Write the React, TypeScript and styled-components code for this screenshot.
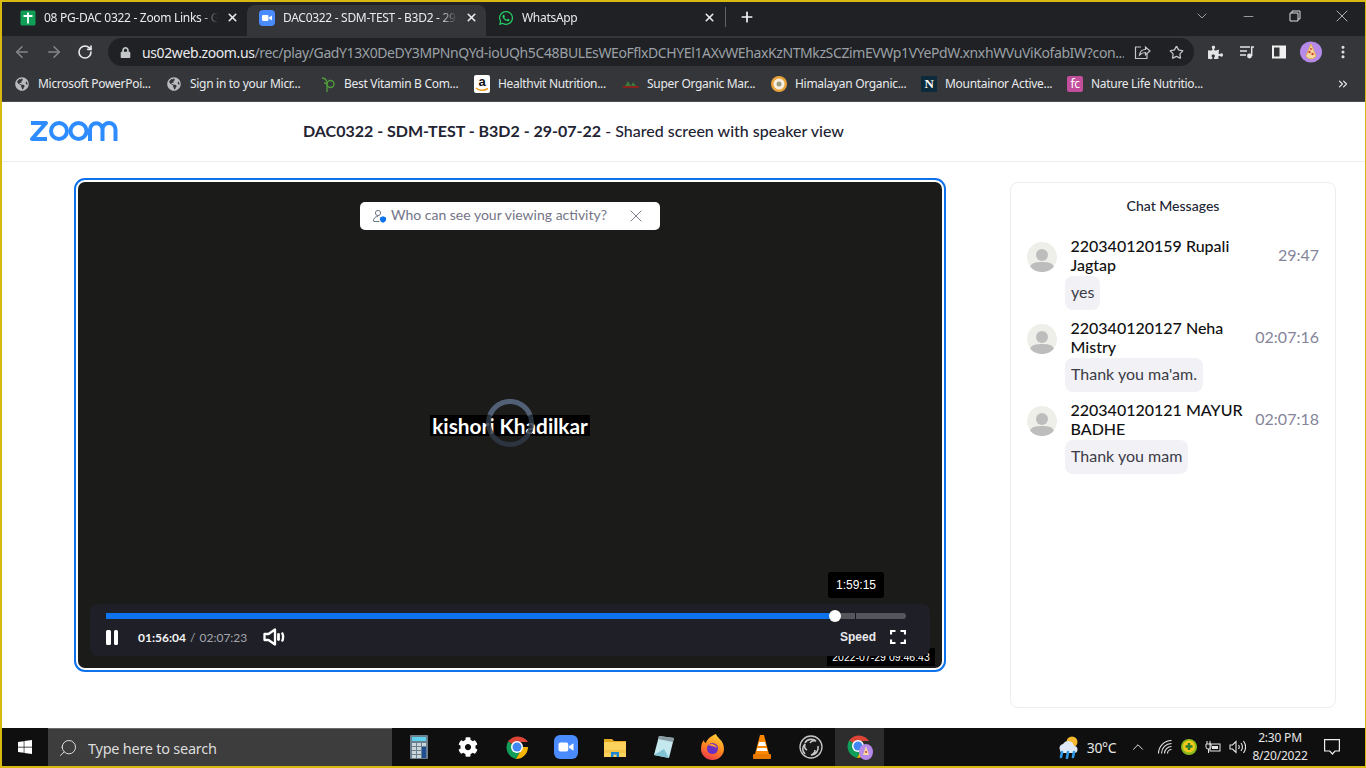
import React from "react";
import styled, { createGlobalStyle } from "styled-components";
import { FaWhatsapp, FaWindows, FaPuzzlePiece, FaLock, FaGlobeAmericas, FaCog } from "react-icons/fa";
import { ArrowLeft, ArrowRight, RotateCw, X, Plus, ChevronDown, Minus, Star, MoreVertical, Search, ChevronUp, ChevronsRight } from "lucide-react";

const Global = createGlobalStyle`
  html, body { margin: 0; padding: 0; background: #fff; overflow: hidden; }
  * { box-sizing: border-box; }
`;

const Screen = styled.div`
  width: 1366px; height: 768px; display: flex; flex-direction: column;
  border-style: solid; border-color: #d8b90f; border-width: 2px 1px 2px 2px;
  font-family: "Lato", sans-serif; overflow: hidden; background: #fff;
`;
const TabBar = styled.div`
  height: 34px; background: #202124; display: flex; align-items: flex-end; padding-left: 6px; flex: none;
`;
const Tab = styled.div<{ $active?: boolean; $w: number }>`
  width: ${p => p.$w}px; height: 31px; display: flex; align-items: center; padding: 0 8px 6px 12px; gap: 8px; flex: none;
  background: ${p => (p.$active ? "#35363a" : "transparent")};
  border-radius: 8px 8px 0 0; color: #e8eaed; font: 12px "Noto Sans", sans-serif;
`;
const TabTitle = styled.span`
  flex: 1; white-space: nowrap; overflow: hidden; letter-spacing: -0.3px;
  -webkit-mask-image: linear-gradient(90deg, #000 90%, transparent 100%);
  mask-image: linear-gradient(90deg, #000 90%, transparent 100%);
`;
const TabDivider = styled.div`
  width: 1px; height: 20px; background: #5f6368; margin: 0 13px 9px 1px; flex: none;
`;
const PlusWrap = styled.div`
  height: 30px; width: 16px; margin-bottom: 4px; color: #f2f3f4; display: flex; align-items: center; justify-content: center; flex: none;
`;
const WindowControls = styled.div`
  margin-left: auto; height: 34px; display: flex; color: #dfe0e2;
`;
const WinButton = styled.div`
  width: 46.5px; height: 28px; display: flex; justify-content: center; align-items: center;
`;
const Toolbar = styled.div`
  height: 32px; background: #35363a; display: flex; align-items: center; flex: none; padding-left: 11px;
`;
const NavButtons = styled.div`
  width: 95px; display: flex; gap: 14px; align-items: center; flex: none;
`;
const Omnibox = styled.div`
  width: 1086px; height: 28px; border-radius: 14px; background: #202124; display: flex; align-items: center;
  padding: 0 10px 0 12px; flex: none; color: #c4c7c8;
`;
const UrlText = styled.div`
  flex: 1; margin-left: 11px; font: 14px "Noto Sans", sans-serif; letter-spacing: -0.39px; color: #9aa0a6; white-space: nowrap; overflow: hidden;
  b { font-weight: 400; color: #e8eaed; }
`;
const OmniIcons = styled.div`
  display: flex; align-items: center; gap: 18px; margin-left: 10px; flex: none;
`;
const ToolIcons = styled.div`
  display: flex; align-items: center; margin-left: 5px; color: #e3e4e6;
`;
const ToolSlot = styled.div`
  width: 32px; display: flex; align-items: center; justify-content: center; flex: none;
`;
const Bookmarks = styled.div`
  height: 34px; background: #35363a; display: flex; align-items: center; padding: 0 0 2px 12px; flex: none;
  border-bottom: 1px solid #4a4b4f;
`;
const Bookmark = styled.div<{ $w: number }>`
  width: ${p => p.$w}px; display: flex; align-items: center; gap: 8px; color: #e8eaed; font: 12px "Noto Sans", sans-serif; letter-spacing: -0.3px; white-space: nowrap; flex: none;
`;
const FavSlot = styled.div`
  width: 16px; height: 16px; flex: none; display: flex; align-items: center; justify-content: center; color: #b8babd;
`;
const More = styled.div`
  margin-left: auto; margin-right: 15px; color: #e8eaed; display: flex;
`;
const Header = styled.header`
  height: 60px; flex: none; display: flex; align-items: center; border-bottom: 1px solid #ededed; padding: 0 0 1px 28px; background: #fff;
`;
const LogoWrap = styled.div`
  width: 274px; flex: none; display: flex;
`;
const Title = styled.h1`
  margin: 0 0 1px -1px; font: 500 16px "Lato", sans-serif; color: #232333; white-space: nowrap;
  b { font-weight: 700; }
`;
const Main = styled.main`
  flex: 1; display: flex; align-items: flex-start; padding: 16px 30px 0 72px; min-height: 0;
`;
const VideoFrame = styled.div`
  width: 872px; height: 494px; flex: none; border: 2px solid #0e72ed; border-radius: 11px; padding: 2px; background: #fff;
`;
const Video = styled.div`
  position: relative; width: 100%; height: 100%; background: #1b1b1a; border-radius: 7px;
`;
const Notice = styled.div`
  position: absolute; left: 282px; top: 20px; width: 300px; height: 28px; background: #fff; border-radius: 5px;
  display: flex; align-items: center; padding: 0 14px 0 12px; color: #747487; font-size: 14px;
`;
const NoticeText = styled.span`
  flex: 1; margin: 0 0 3px 3px;
`;
const NameTag = styled.div`
  position: absolute; left: 352px; top: 233px; width: 160px; height: 21px; background: #000; color: #fff;
  font: 700 20.8px/21px "Lato", sans-serif; text-align: center; white-space: nowrap;
`;
const Spinner = styled.svg`
  position: absolute; left: 408px; top: 217px;
`;
const Stamp = styled.div`
  position: absolute; left: 749px; top: 466px; width: 108px; height: 18px; background: #000; color: #fff;
  font: 10.5px/18px "Liberation Sans", sans-serif; text-align: center; white-space: nowrap;
`;
const Controls = styled.div`
  position: absolute; left: 12px; top: 422px; width: 840px; height: 52px; background: #1f2027; border-radius: 8px;
  padding: 9px 24px 0 16px;
`;
const Track = styled.div`
  position: relative; height: 6px; background: #55565c; border-radius: 0 3px 3px 0;
`;
const Played = styled.div`
  position: absolute; left: 0; top: 0; bottom: 0; background: #0e72ed;
`;
const Tick = styled.div`
  position: absolute; left: 749px; top: 0; bottom: 0; width: 1px; background: #15161a;
`;
const Thumb = styled.div`
  position: absolute; top: -3px; width: 12px; height: 12px; margin-left: -6px; border-radius: 50%; background: #fff;
`;
const ControlRow = styled.div`
  display: flex; align-items: center; height: 26px; margin-top: 5px; color: #fff;
`;
const PauseIcon = styled.div`
  display: flex; gap: 3px; width: 32px; flex: none;
  i { display: block; width: 4.5px; height: 15px; border-radius: 1.5px; background: #fff; }
`;
const Times = styled.div`
  font-size: 12px; color: #a6a6ad; white-space: nowrap; word-spacing: 1px;
  b { color: #f2f2f4; font-weight: 700; }
`;
const VolumeWrap = styled.div`
  display: flex; margin-left: 16px;
`;
const Speed = styled.div`
  margin-left: auto; font: 700 12px "Liberation Sans", sans-serif; color: #e9e9ec;
`;
const FullWrap = styled.div`
  display: flex; margin-left: 14px;
`;
const Tooltip = styled.div`
  position: absolute; left: 750px; top: 390px; width: 56px; height: 26px; background: #000; border-radius: 3px; color: #fff;
  font: 12px/26px "Liberation Sans", sans-serif; text-align: center;
`;
const Chat = styled.aside`
  margin-left: 64px; margin-top: 4px; width: 326px; height: 526px; flex: none; border: 1px solid #ededed; border-radius: 8px;
  padding: 14px 16px 0 16px;
`;
const ChatTitle = styled.div`
  text-align: center; font: 500 14px/18px "Lato", sans-serif; color: #1c2433; margin-bottom: 21px;
`;
const Msg = styled.div`
  display: flex; flex-direction: column; margin-bottom: 8px;
`;
const MsgHead = styled.div`
  display: flex; align-items: center;
`;
const Avatar = styled.svg`
  flex: none; margin: 4px 14px 0 0;
`;
const Name = styled.div`
  width: 179px; flex: none; font: 500 16px/19px "Lato", sans-serif; color: #111; margin-left: -0.5px;
`;
const Time = styled.div`
  margin-left: auto; margin-bottom: 2px; color: #85859a; font: 16px "Lato", sans-serif;
`;
const Bubble = styled.div`
  align-self: flex-start; margin: 2px 0 0 38px; height: 34px; padding: 0 6px; border-radius: 8px; background: #f1f1f6; color: #3c3c46;
  font: 16px/32px "Lato", sans-serif;
`;
const Taskbar = styled.footer`
  height: 38px; flex: none; background: #0f0f0f; display: flex; align-items: stretch; color: #e6e6e6;
`;
const StartButton = styled.div`
  width: 46px; display: flex; align-items: center; justify-content: center; color: #fff; flex: none;
`;
const SearchBox = styled.div`
  width: 344px; flex: none; background: #3d3d3d; border-top: 1px solid #6a6a6a; display: flex; align-items: center; padding-left: 10px; gap: 10px;
  font: 14.5px "Noto Sans", sans-serif; letter-spacing: -0.25px; color: #dcdcdc;
  svg { transform: scaleX(-1); }
`;
const Pinned = styled.div`
  display: flex; margin-left: 2px;
`;
const PinSlot = styled.div<{ $active?: boolean }>`
  width: 49px; display: flex; align-items: center; justify-content: center; background: ${p => (p.$active ? "#2d2d2d" : "transparent")}; position: relative;
`;
const Tray = styled.div`
  margin-left: auto; display: flex; align-items: center; font: 14px "Noto Sans", sans-serif; letter-spacing: -0.3px;
`;
const TrayItem = styled.div<{ $w: number }>`
  width: ${p => p.$w}px; display: flex; align-items: center; justify-content: center; flex: none;
`;
const Clock = styled.div`
  width: 60px; text-align: center; font: 12px/18px "Noto Sans", sans-serif; letter-spacing: -0.2px; white-space: nowrap;
`;
const NoteWrap = styled.div`
  width: 55px; display: flex; justify-content: flex-start; align-items: center; padding-left: 14px;
`;

const SheetIcon = () => (
  <svg width="16" height="16" viewBox="0 0 16 16"><rect x="0.5" y="0.5" width="15" height="15" rx="1.5" fill="#0f9d58" /><path d="M3.5 6h9M8 2.5v11" stroke="#fff" strokeWidth="1.8" /></svg>
);
const ZoomTile = ({ s = 16 }: { s?: number }) => (
  <svg width={s} height={s} viewBox="0 0 16 16"><rect width="16" height="16" rx="4" fill="#4a8cff" /><rect x="3" y="5" width="6.5" height="6" rx="1.3" fill="#fff" /><path d="M10 7.5l3-2v5l-3-2z" fill="#fff" /></svg>
);
const Logo = () => (
  <svg width="90" height="22" viewBox="0 0 90 22" fill="none" stroke="#2d8cff" strokeWidth="4">
    <path d="M1 3h15L2 19h15" strokeLinejoin="round" />
    <circle cx="29" cy="11" r="8" />
    <circle cx="48.5" cy="11" r="8" />
    <path d="M60 21V9.5a6 6 0 0 1 12.5 0V21M72.5 9.5a6 6 0 0 1 13 0V21" />
  </svg>
);
const Avatarish = () => (
  <Avatar width="30" height="30" viewBox="0 0 30 30">
    <circle cx="15" cy="15" r="15" fill="#efefe9" />
    <circle cx="15" cy="13" r="6" fill="#bdbdbd" />
    <path d="M3 24.5C5 20.5 10 20 15 20s10 .5 12 4.500A15 15 0 0 1 15 30 15 15 0 0 1 3 24.500z" fill="#bdbdbd" />
  </Avatar>
);
const ShareIcon = () => (
  <svg width="17" height="16" viewBox="0 0 17 16" fill="none" stroke="#c4c7c8" strokeWidth="1.2"><path d="M7 3H1.500v11.500H13V10" /><path d="M5.500 11c.5-3.500 3-5.500 6-5.500V3l4.500 4-4.500 3.800V8.500c-2.500 0-4.500 1-6 2.500z" /></svg>
);
const ProfileIcon = () => (
  <svg width="22" height="22" viewBox="0 0 22 22">
    <ellipse cx="11" cy="11" rx="11" ry="10.5" fill="#b58ae8" />
    <path d="M11 3l5 12a6 6 0 0 1-10 0z" fill="#f4d9a0" stroke="#e8b050" />
    <circle cx="9.500" cy="11" r="1.200" fill="#d04030" /><circle cx="12.500" cy="13" r="1.200" fill="#d04030" /><circle cx="11" cy="8" r="1" fill="#d04030" />
  </svg>
);
const SideIcon = () => (
  <svg width="16" height="16" viewBox="0 0 16 16"><rect x="1" y="1.500" width="14" height="13" fill="#f0f0f0" /><rect x="3" y="3.500" width="5.500" height="9" fill="#35363a" /></svg>
);
const MediaIcon = () => (
  <svg width="16" height="16" viewBox="0 0 16 16" fill="none" stroke="#e3e4e6" strokeWidth="1.5"><path d="M1 3h10M1 7h7M1 11h6M12 3h3M12.700 3v9" /><circle cx="10.500" cy="12" r="1.700" fill="#e3e4e6" /></svg>
);
const VolumeIcon = () => (
  <svg width="23" height="18" viewBox="0 0 23 18" fill="none" stroke="#fff" strokeWidth="2.300"><path d="M1.500 6h4L12 1.500v15L5.500 12h-4z" strokeLinejoin="round" /><path d="M15.500 6.500v5" strokeLinecap="round" strokeWidth="2.800" /><path d="M19 4.500c1.500 3 1.500 6 0 9" /></svg>
);
const FullIcon = () => (
  <svg width="16" height="16" viewBox="0 0 16 16" fill="none" stroke="#fff" strokeWidth="2.200"><path d="M1 5.500V2h4.500M10.500 2H15v3.500M15 10.500V14h-4.500M5.500 14H1v-3.500" /></svg>
);
const ViewerIcon = () => (
  <svg width="16" height="16" viewBox="0 0 16 16"><circle cx="6" cy="5" r="2.600" fill="none" stroke="#6e7687" /><path d="M1.500 13c0-3 2-4.500 4.500-4.500" fill="none" stroke="#6e7687" /><path d="M1.500 13.500h6" stroke="#6e7687" /><path d="M8 9.500l3-1.300 3 1.300v2c0 1.700-1.400 2.800-3 3.300-1.600-.5-3-1.600-3-3.300z" fill="#0e72ed" /></svg>
);
const Calc = () => (
  <svg width="18" height="24" viewBox="0 0 18 24"><rect width="18" height="24" rx="1" fill="#6b7f8e" /><rect x="2" y="2" width="14" height="4" fill="#5fd0ee" /><g fill="#cbd5dc"><rect x="2" y="8" width="4" height="3" /><rect x="7" y="8" width="4" height="3" /><rect x="12" y="8" width="4" height="3" /><rect x="2" y="12" width="4" height="3" /><rect x="7" y="12" width="4" height="3" /><rect x="2" y="16" width="4" height="3" /><rect x="7" y="16" width="4" height="3" /><rect x="2" y="20" width="4" height="3" /><rect x="7" y="20" width="4" height="3" /></g><rect x="12" y="12" width="4" height="11" fill="#1d4f91" /></svg>
);
const ChromeLogo = ({ s = 24 }: { s?: number }) => (
  <svg width={s} height={s} viewBox="0 0 24 24">
    <path d="M12 12L3 6.500A12 12 0 0 1 23 7H12z" fill="#db4437" />
    <path d="M12 12L3 6.500A12 12 0 0 0 11 24l5-9z" fill="#0f9d58" />
    <path d="M12 12h11a12 12 0 0 1-12 12l5-9z" fill="#f4b400" />
    <circle cx="12" cy="12" r="6" fill="#fff" /><circle cx="12" cy="12" r="4.500" fill="#4285f4" />
  </svg>
);
const Folder = () => (
  <svg width="22" height="20" viewBox="0 0 22 20"><path d="M0 2h8l2 2h12v3H0z" fill="#e3a921" /><rect y="5" width="22" height="15" fill="#fbd35c" /><rect y="13" width="22" height="3" fill="#f3c34a" /><path d="M7 20v-5h8v5h-2.500v-2.500h-3V20z" fill="#1f86d6" /></svg>
);
const Note = () => (
  <svg width="24" height="26" viewBox="0 0 24 26"><path d="M7 2l15 2-5 20-15-3z" fill="#c4e8ee" /><path d="M7 2l15 2-1 4-15-3z" fill="#8a9aa3" /><path d="M2 21l15 3-5-9z" fill="#7fc2d4" /></svg>
);
const Firefox = () => (
  <svg width="24" height="26" viewBox="0 0 24 26">
    <defs><linearGradient id="ff" x1="0.700" y1="0" x2="0.300" y2="1"><stop offset="0" stopColor="#ffd23a" /><stop offset="0.500" stopColor="#ff8a1e" /><stop offset="1" stopColor="#f0384a" /></linearGradient></defs>
    <path d="M15 0c1 4 8 6 8 15a11.500 11 0 0 1-23 0c0-4 1-7 3-9 0 2 1 3 2 3 1-4 5-7 10-9z" fill="url(#ff)" />
    <circle cx="11.500" cy="14.500" r="5.500" fill="#6b2fc4" /><path d="M7 11c3-2 8-1 9 3-2-1.500-6-2-9-3z" fill="#ff9a2e" />
  </svg>
);
const Vlc = () => (
  <svg width="18" height="24" viewBox="0 0 18 24"><path d="M7 0h4l5 19H2z" fill="#ff8800" /><path d="M6 7h6l1 4H5zM4.500 13h9l1 3h-11z" fill="#fff" /><rect y="19" width="18" height="5" rx="1" fill="#e87a00" /></svg>
);
const Obs = () => (
  <svg width="24" height="24" viewBox="0 0 24 24" fill="none" stroke="#c8c8c8"><circle cx="12" cy="12" r="11" strokeWidth="1.300" fill="#181818" /><path d="M6 8c2-4 8-5 11-2-3-1-5 0-6 2M19 11c1 4-2 9-7 9 3-1 4-3 4-5M6 19c-3-3-3-7 0-10 -1 3 0 5 2 6" strokeWidth="1.600" /></svg>
);
const ChromeProfile = () => (
  <svg width="28" height="26" viewBox="0 0 28 26">
    <path d="M12 12L3 6.500A12 12 0 0 1 23 7H12z" fill="#db4437" /><path d="M12 12L3 6.500A12 12 0 0 0 11 24l5-9z" fill="#0f9d58" /><path d="M12 12h11a12 12 0 0 1-12 12l5-9z" fill="#f4b400" /><circle cx="12" cy="12" r="6" fill="#fff" /><circle cx="12" cy="12" r="4.500" fill="#4285f4" />
    <ellipse cx="20" cy="18" rx="7" ry="8" fill="#b58ae8" /><path d="M20 12l3 9h-6z" fill="#f4d9a0" /><circle cx="20" cy="18" r="1" fill="#d04030" />
  </svg>
);
const Weather = () => (
  <svg width="24" height="24" viewBox="0 0 24 24"><circle cx="16" cy="7" r="5.500" fill="#f5b82e" /><path d="M4 15a4 4 0 0 1 3-6 6 6 0 0 1 11 2 3.500 3.500 0 0 1 0 7H6a3 3 0 0 1-2-3z" fill="#dfe9f5" /><path d="M6 17l-1 5M12 17l-1 6M18 17l-1 5" stroke="#2f9be8" strokeWidth="2.600" strokeLinecap="round" /></svg>
);
const WifiTray = () => (
  <svg width="16" height="16" viewBox="0 0 16 16" fill="none" stroke="#e6e6e6" strokeWidth="1.100"><path d="M1.500 14.500A13 13 0 0 1 14.500 1.500M4.500 14.500A10 10 0 0 1 14.500 4.500M7.500 14.500A7 7 0 0 1 14.500 7.500M10.500 14.500a4 4 0 0 1 4-4" /></svg>
);
const SpeakerTray = () => (
  <svg width="17" height="16" viewBox="0 0 17 16" fill="none" stroke="#e6e6e6" strokeWidth="1.100"><path d="M1 6h2.500L7 2.500v11L3.500 10H1z" /><path d="M9.500 6c1 1.300 1 2.700 0 4M12 4c1.800 2.500 1.800 5.500 0 8M14.500 2c2.800 4 2.800 8 0 12" /></svg>
);
const Shield = () => (
  <svg width="16" height="16" viewBox="0 0 16 16"><circle cx="8" cy="8" r="8" fill="#8dbb1c" /><circle cx="8" cy="7.500" r="6" fill="#f3c91d" /><path d="M8 4v7M4.500 7.500h7" stroke="#2b7d2b" strokeWidth="2.400" /></svg>
);
const Battery = () => (
  <svg width="16" height="14" viewBox="0 0 16 14" fill="none" stroke="#e6e6e6"><rect x="5" y="4" width="10" height="7" fill="#0f0f0f" /><rect x="7" y="6" width="6" height="3" fill="#e6e6e6" stroke="none" /><path d="M2 1v3M5 1v3M1 4h5v3a2 2 0 0 1-2 2H3a2 2 0 0 1-2-2zM3.500 9v4" /></svg>
);
const Notify = () => (
  <svg width="16" height="16" viewBox="0 0 16 16" fill="none" stroke="#eee" strokeWidth="1.200"><path d="M.6.6h14.800v11.400h-4.400l-2.600 3-2.600-3H.6z" /></svg>
);
const Globe = () => <FaGlobeAmericas size={14} />;
const HerbFav = () => (
  <svg width="16" height="16" viewBox="0 0 16 16" fill="none" stroke="#4f9a3c" strokeWidth="1.400"><circle cx="10.500" cy="8" r="3.500" /><path d="M7 6v10M2 2c2 0 4 1 5 4M4 7c1 0 2 0 3 1" /></svg>
);
const AmazonBox = styled.div`
  position: relative; width: 16px; height: 18px; border-radius: 2px; background: #fff; color: #111;
  font: 700 13px/13px "Liberation Sans", sans-serif; text-align: center; overflow: hidden;
  svg { position: absolute; left: 0; bottom: 0; }
`;
const AmazonFav = () => (
  <AmazonBox>a<svg width="16" height="6" viewBox="0 0 16 6"><path d="M2 1c3 3 8 3 12 .5" stroke="#f19c1f" strokeWidth="1.500" fill="none" /></svg></AmazonBox>
);
const OrganicFav = () => (
  <svg width="16" height="12" viewBox="0 0 16 12"><rect y="8" width="16" height="2" fill="#8a2020" /><path d="M2 8l3-5 3 5zM8 8l2-4 3 4z" fill="#3d7a3d" /></svg>
);
const HimalayaFav = () => (
  <svg width="16" height="16" viewBox="0 0 16 16"><circle cx="8" cy="8" r="8" fill="#e8a33a" /><circle cx="8" cy="8" r="5.500" fill="#f6eee0" /><circle cx="8" cy="8" r="2.500" fill="#9a9a7e" /></svg>
);
const NFav = styled.div`
  width: 16px; height: 16px; background: #0b2a3a; color: #fff; font: 700 13px/16px "Liberation Serif", serif; text-align: center;
`;
const FcFav = styled.div`
  width: 16px; height: 16px; border-radius: 2px; background: #c24f9c; color: #fff; font: 12px/16px "Noto Sans", sans-serif; text-align: center; letter-spacing: -0.5px;
`;

const marks: [number, React.ReactNode, string][] = [
  [152, <Globe />, "Microsoft PowerPoi..."],
  [154, <Globe />, "Sign in to your Micr..."],
  [154, <HerbFav />, "Best Vitamin B Com..."],
  [149, <AmazonFav />, "Healthvit Nutrition..."],
  [148, <OrganicFav />, "Super Organic Mar..."],
  [150, <HimalayaFav />, "Himalayan Organic..."],
  [146, <NFav>N</NFav>, "Mountainor Active..."],
  [140, <FcFav>fc</FcFav>, "Nature Life Nutritio..."],
];
const messages = [
  { name: "220340120159 Rupali Jagtap", time: "29:47", text: "yes" },
  { name: "220340120127 Neha Mistry", time: "02:07:16", text: "Thank you ma'am." },
  { name: "220340120121 MAYUR BADHE", time: "02:07:18", text: "Thank you mam" },
];

export default function App() {
  return (
    <Screen>
      <Global />
      <TabBar>
        <Tab $w={239}><SheetIcon /><TabTitle>08 PG-DAC 0322 - Zoom Links - Google Sheets</TabTitle><X size={13} strokeWidth={3} /></Tab>
        <Tab $w={239} $active><ZoomTile /><TabTitle>DAC0322 - SDM-TEST - B3D2 - 29-07-22</TabTitle><X size={13} strokeWidth={3} /></Tab>
        <Tab $w={238}><FaWhatsapp size={16} color="#25d366" /><TabTitle>WhatsApp</TabTitle><X size={13} strokeWidth={3} /></Tab>
        <TabDivider />
        <PlusWrap><Plus size={18} strokeWidth={2.6} /></PlusWrap>
        <WindowControls>
          <WinButton><ChevronDown size={16} strokeWidth={1} /></WinButton>
          <WinButton><Minus size={15} strokeWidth={1} /></WinButton>
          <WinButton><svg width="12" height="12" viewBox="0 0 12 12" fill="none" stroke="#dfe0e2"><path d="M3 3V1h8v8H9M1 3h8v8H1z" /></svg></WinButton>
          <WinButton><X size={20} strokeWidth={0.9} /></WinButton>
        </WindowControls>
      </TabBar>
      <Toolbar>
        <NavButtons>
          <ArrowLeft size={18} color="#85878b" />
          <ArrowRight size={18} color="#85878b" />
          <RotateCw size={16} color="#e8eaed" strokeWidth={2.4} />
        </NavButtons>
        <Omnibox>
          <FaLock size={11} />
          <UrlText><b>us02web.zoom.us</b>/rec/play/GadY13X0DeDY3MPNnQYd-ioUQh5C48BULEsWEoFflxDCHYEl1AXvWEhaxKzNTMkzSCZimEVWp1VYePdW.xnxhWVuViKofabIW?con...</UrlText>
          <OmniIcons><ShareIcon /><Star size={15} /></OmniIcons>
        </Omnibox>
        <ToolIcons>
          <ToolSlot><FaPuzzlePiece size={15} /></ToolSlot>
          <ToolSlot><MediaIcon /></ToolSlot>
          <ToolSlot><SideIcon /></ToolSlot>
          <ToolSlot><ProfileIcon /></ToolSlot>
          <ToolSlot><MoreVertical size={16} strokeWidth={2.6} /></ToolSlot>
        </ToolIcons>
      </Toolbar>
      <Bookmarks>
        {marks.map(([w, icon, label]) => (
          <Bookmark key={label} $w={w}><FavSlot>{icon}</FavSlot><span>{label}</span></Bookmark>
        ))}
        <More><ChevronsRight size={14} /></More>
      </Bookmarks>
      <Header>
        <LogoWrap><Logo /></LogoWrap>
        <Title><b>DAC0322 - SDM-TEST - B3D2 - 29-07-22</b> - Shared screen with speaker view</Title>
      </Header>
      <Main>
        <VideoFrame>
          <Video>
            <Notice><ViewerIcon /><NoticeText>Who can see your viewing activity?</NoticeText><X size={20} strokeWidth={1.1} /></Notice>
            <NameTag>kishori Khadilkar</NameTag>
            <Spinner width="48" height="48" viewBox="0 0 48 48" fill="none">
              <circle cx="24" cy="24" r="21.500" stroke="#2e3846" strokeOpacity="0.85" strokeWidth="5" />
              <path d="M4 16A21.500 21.500 0 0 1 44 16" stroke="#56657b" strokeOpacity="0.9" strokeWidth="5" />
            </Spinner>
            <Stamp>2022-07-29 09:46:43</Stamp>
            <Controls>
              <Track>
                <Played style={{ width: "729px" }} />
                <Tick />
                <Thumb style={{ left: "729px" }} />
              </Track>
              <ControlRow>
                <PauseIcon><i /><i /></PauseIcon>
                <Times><b>01:56:04</b> / 02:07:23</Times>
                <VolumeWrap><VolumeIcon /></VolumeWrap>
                <Speed>Speed</Speed>
                <FullWrap><FullIcon /></FullWrap>
              </ControlRow>
            </Controls>
            <Tooltip>1:59:15</Tooltip>
          </Video>
        </VideoFrame>
        <Chat>
          <ChatTitle>Chat Messages</ChatTitle>
          {messages.map(m => (
            <Msg key={m.name}>
              <MsgHead><Avatarish /><Name>{m.name}</Name><Time>{m.time}</Time></MsgHead>
              <Bubble>{m.text}</Bubble>
            </Msg>
          ))}
        </Chat>
      </Main>
      <Taskbar>
        <StartButton><FaWindows size={16} /></StartButton>
        <SearchBox><Search size={20} strokeWidth={1.2} />Type here to search</SearchBox>
        <Pinned>
          <PinSlot><Calc /></PinSlot>
          <PinSlot><FaCog size={20} color="#fff" /></PinSlot>
          <PinSlot><ChromeLogo /></PinSlot>
          <PinSlot><ZoomTile s={24} /></PinSlot>
          <PinSlot><Folder /></PinSlot>
          <PinSlot><Note /></PinSlot>
          <PinSlot><Firefox /></PinSlot>
          <PinSlot><Vlc /></PinSlot>
          <PinSlot><Obs /></PinSlot>
          <PinSlot $active><ChromeProfile /></PinSlot>
        </Pinned>
        <Tray>
          <TrayItem $w={24}><Weather /></TrayItem>
          <TrayItem $w={43}>30°C</TrayItem>
          <TrayItem $w={30}><ChevronUp size={18} strokeWidth={1.3} /></TrayItem>
          <TrayItem $w={24}><WifiTray /></TrayItem>
          <TrayItem $w={23}><Shield /></TrayItem>
          <TrayItem $w={25}><Battery /></TrayItem>
          <TrayItem $w={25}><SpeakerTray /></TrayItem>
          <Clock>2:30 PM<br />8/20/2022</Clock>
          <NoteWrap><Notify /></NoteWrap>
        </Tray>
      </Taskbar>
    </Screen>
  );
}
